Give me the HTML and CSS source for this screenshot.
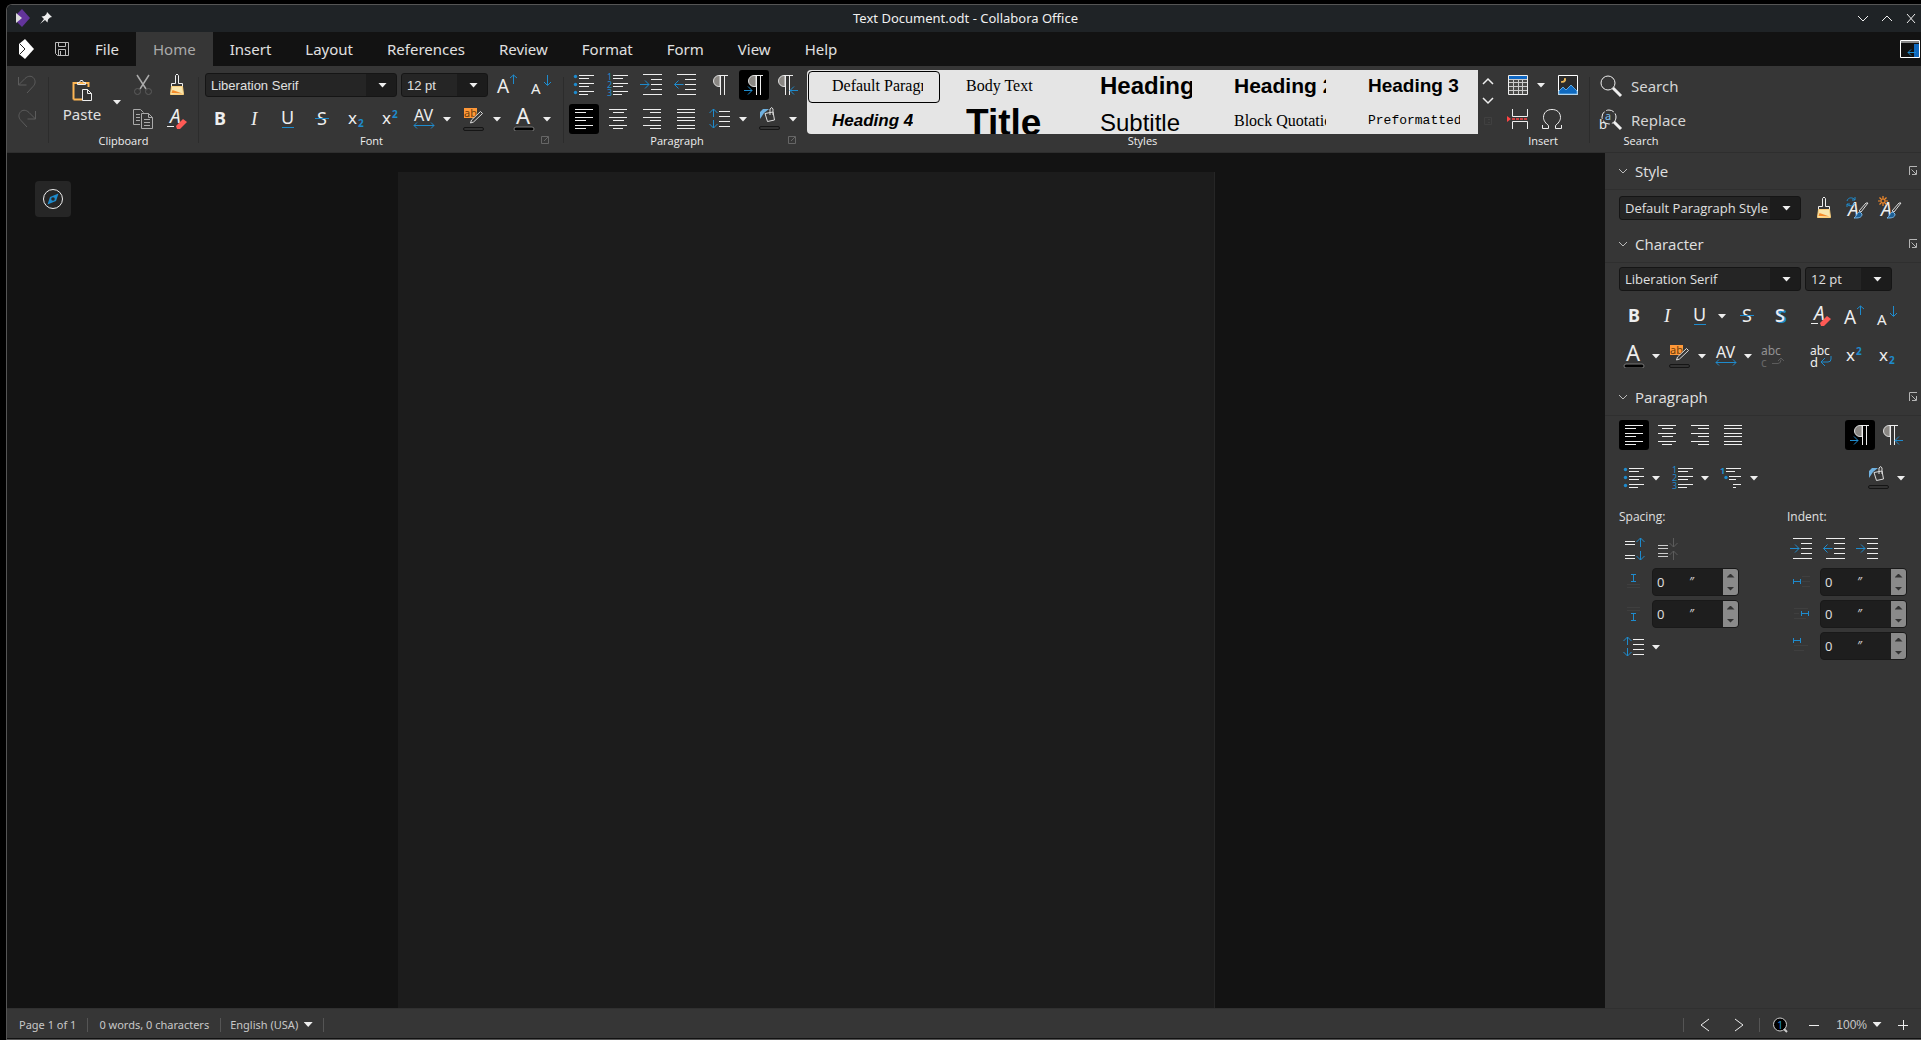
FILE: index.html
```html
<!DOCTYPE html>
<html lang="en">
<head>
    <meta charset="UTF-8">
    <meta name="viewport" content="width=device-width, initial-scale=1.0">
    <title>Text Document.odt - Collabora Office</title>
    <link rel="stylesheet" href="styles.css">
</head>
<body>

<!-- icon sheet -->
<svg class="sheet" aria-hidden="true">
    <symbol id="i-undo" viewBox="0 0 24 24"><path class="dim" d="M3.5 4v8h8M3.5 12L10 5.5c3-3 7-3 9 0s1 6-1 8L12 20"/></symbol>
    <symbol id="i-redo" viewBox="0 0 24 24"><path class="dim" d="M20.5 4v8h-8M20.5 12L14 5.5c-3-3-7-3-9 0s-1 6 1 8L12 20"/></symbol>
    <symbol id="i-save" viewBox="0 0 24 24"><path d="M5.5 5.5h13v13h-11l-2-2zM8.5 5.5v4h7v-4M8.5 18v-5.5h7V18M10.5 14v4" fill="none" stroke="#bbb"/></symbol>
    <symbol id="i-paste" viewBox="0 0 24 24"><path d="M3.5 20.5V4h15v4M3.5 20.5h9" fill="none" stroke="#fdb553" stroke-width="2"/><path class="w" d="M7.500 5.500v-2h2l1-2h2l1 2h2v2z"/><path d="M12.5 10.5h5l4 4v7h-9zM17.5 10.5v4h4" fill="#333" stroke="#eee"/></symbol>
    <symbol id="i-cut" viewBox="0 0 24 24"><path d="M6 2l9 14M18 2L9 16" fill="none" stroke="#aaa" stroke-width="1.5"/><g class="dim"><circle cx="6.5" cy="18.5" r="3"/><circle cx="17.5" cy="18.5" r="3"/></g></symbol>
    <symbol id="i-copy" viewBox="0 0 24 24"><path d="M9 17.5H2.5v-15h7l3 3M5 7.5h4M5 10.5h4M5 13.5h4M10.5 6.5h7l4 4v11h-11zM17.5 6.5v4h4M13 12.5h6M13 15.5h6M13 18.5h6" fill="none" stroke="#aaa"/></symbol>
    <symbol id="i-brush" viewBox="0 0 24 24"><path class="w" d="M6.5 13.5v-3h4v-8q1.5-3 3 0v8h4v3z"/><path d="M6.5 13.5h11l1 8h-13z" fill="#f8e6ae" stroke="#fdd07c"/><path d="M6.5 20l1-3 10 3.500z" fill="#f58b2b"/></symbol>
    <symbol id="i-clear" viewBox="0 0 24 24"><text x="5" y="16" font-size="19" font-style="italic">A</text><path class="w" d="M2 19.5h7"/><path d="M11 19l7-7 4 3-7 7h-3z" fill="#ff5a55"/></symbol>
    <symbol id="i-bold" viewBox="0 0 24 24"><text x="6" y="18" font-size="18" font-weight="700">B</text></symbol>
    <symbol id="i-italic" viewBox="0 0 24 24"><text x="9" y="18" font-size="19" font-style="italic" class="serif">I</text></symbol>
    <symbol id="i-under" viewBox="0 0 24 24"><text x="5" y="17" font-size="18">U</text><path class="b" d="M6 20.5h12"/></symbol>
    <symbol id="i-strike" viewBox="0 0 24 24"><text x="7" y="18" font-size="18">S</text><path class="b" d="M5 11.5h14"/></symbol>
    <symbol id="i-shadow" viewBox="0 0 24 24"><text x="9" y="19" font-size="18" font-weight="700" class="bt">S</text><text x="7" y="18" font-size="18" font-weight="500">S</text></symbol>
    <symbol id="i-sub" viewBox="0 0 24 24"><text x="4" y="17" font-size="17">x</text><text x="14" y="20" font-size="10" font-weight="700" class="bt">2</text></symbol>
    <symbol id="i-sup" viewBox="0 0 24 24"><text x="4" y="17" font-size="17">x</text><text x="14" y="11" font-size="10" font-weight="700" class="bt">2</text></symbol>
    <symbol id="i-kern" viewBox="0 0 24 24"><text x="2" y="14" font-size="16">AV</text><path class="b" d="M2 18.5h20M5 15.5l-3 3 3 3M19 15.5l3 3-3 3"/></symbol>
    <symbol id="i-mark" viewBox="0 0 24 24"><path d="M2 1h13v10H2z" fill="#ff9838"/><text x="2" y="10" font-size="11" class="dark">ab</text><path d="M18.5 4.5l2 2-9 8.500-3 1 1-3z" fill="#363636" stroke="#ddd"/><rect x="1.5" y="20.5" width="20" height="3" rx="1.5" fill="#333" stroke="#151515"/></symbol>
    <symbol id="i-color" viewBox="0 0 24 24"><text x="4" y="17" font-size="22">A</text><rect x="2" y="20" width="20" height="4" rx="2" fill="#000" stroke="#777"/></symbol>
    <symbol id="i-grow" viewBox="0 0 24 24"><text x="2" y="20" font-size="19">A</text><path class="b" d="M18.5 11V2M15 5l3.500-3L22 5"/></symbol>
    <symbol id="i-shrink" viewBox="0 0 24 24"><text x="2" y="21" font-size="15">A</text><path class="b" d="M18.5 2v10M15 9l3.5 3.500L22 9"/></symbol>
    <symbol id="i-bullets" viewBox="0 0 24 24"><g fill="#1e8bcd"><circle cx="3.5" cy="3.5" r="1.7"/><circle cx="3.5" cy="11.5" r="1.7"/><circle cx="3.5" cy="19.5" r="1.7"/></g><path class="w" d="M7 2.5h15M7 5.5h10M7 10.5h15M7 13.5h10M7 18.5h15M7 21.5h9"/></symbol>
    <symbol id="i-numbers" viewBox="0 0 24 24"><g font-size="9"><text class="bt" x="1" y="7">1</text><text class="bt" x="1" y="15">2</text><text class="bt" x="1" y="23">3</text></g><path class="w" d="M7 2.5h15M7 5.5h10M7 10.5h15M7 13.5h10M7 18.5h15M7 21.5h9"/></symbol>
    <symbol id="i-outline" viewBox="0 0 24 24"><text class="bt" x="0" y="8" font-size="9" font-weight="700">1</text><circle cx="6" cy="11.5" r="1.7" fill="#1e8bcd"/><path class="w" d="M6 2.5h15M6 5.5h9M9 10.5h12M9 13.5h7M13 18.5h8M13 21.5h3"/></symbol>
    <symbol id="i-indent" viewBox="0 0 24 24"><path class="w" d="M3 1.5h19M11 6.5h11M11 11.5h11M11 16.5h11M3 21.5h19"/><path class="b" d="M0 11.5h9M5 7.5l4 4-4 4"/></symbol>
    <symbol id="i-outdent" viewBox="0 0 24 24"><path class="w" d="M3 1.5h19M11 6.5h11M11 11.5h11M11 16.5h11M3 21.5h19"/><path class="b" d="M9.5 11.5h-9M4.5 7.5l-4 4 4 4"/></symbol>
    <symbol id="i-hang" viewBox="0 0 24 24"><path class="w" d="M3 1.5h19M11 6.5h11M11 11.5h11M11 16.5h11M11 21.5h11"/><path class="b" d="M0 11.5h9M5 7.5l4 4-4 4"/></symbol>
    <symbol id="i-pilcrow" viewBox="0 0 24 24"><path d="M12 2.5h-1a5.5 5.5 0 0 0 0 11h1z" fill="#8a8783" stroke="#ddd"/><path class="w" d="M11 2.5h9M12.5 2v20M16.5 2v20"/></symbol>
    <symbol id="i-ltr" viewBox="0 0 24 24"><path d="M14 2.5h-2a5.5 5.5 0 0 0 0 11h2z" fill="#8a8783" stroke="#ddd"/><path class="w" d="M13 2.5h8M14.5 2v20M18.5 2v20"/><path class="b" d="M2 17.5h8M6 13.5l4 4-4 4"/></symbol>
    <symbol id="i-rtl" viewBox="0 0 24 24"><path d="M9 2.5H8a5.5 5.5 0 0 0 0 11h1z" fill="#8a8783" stroke="#ddd"/><path class="w" d="M8 2.5h9M9.5 2v20M13.5 2v20"/><path class="b" d="M22 17.5h-8M18 13.5l-4 4 4 4"/></symbol>
    <symbol id="i-left" viewBox="0 0 24 24"><path class="w" d="M3 2.5h18M3 5.5h11M3 10.5h18M3 13.5h11M3 18.5h18M3 21.5h11"/></symbol>
    <symbol id="i-center" viewBox="0 0 24 24"><path class="w" d="M3 2.5h18M7 5.5h11M3 10.5h18M7 13.5h11M3 18.5h18M7 21.5h10"/></symbol>
    <symbol id="i-right" viewBox="0 0 24 24"><path class="w" d="M3 2.5h18M10 5.5h11M3 10.5h18M10 13.5h11M3 18.5h18M10 21.5h11"/></symbol>
    <symbol id="i-justify" viewBox="0 0 24 24"><path class="w" d="M3 2.5h18M3 5.5h18M3 10.5h18M3 13.5h18M3 18.5h18M3 21.5h18"/></symbol>
    <symbol id="i-spacing" viewBox="0 0 24 24"><path class="w" d="M11 4.5h11M11 9.5h11M11 14.5h11M11 19.5h11"/><path class="b" d="M5.5 2v8M1.5 6l4-4 4 4M5.5 13v8M1.5 17l4 4 4-4"/></symbol>
    <symbol id="i-fill" viewBox="0 0 24 24"><path d="M2 12V5l3-3h6l-5 4z" fill="#6fb1e0"/><path d="M7 6.500l8-1.500 1.500 8-7 1.500zM12 8V2q2-3 3 0v6" fill="none" stroke="#ddd"/><rect x="1.5" y="19.5" width="20" height="3" rx="1.5" fill="#333" stroke="#151515"/></symbol>
    <symbol id="i-table" viewBox="0 0 24 24"><path d="M2.5 2.5h19v19h-19z" fill="#4a4a48" stroke="#eee"/><path d="M3 3h18v3H3z" fill="#1068c4"/><path d="M3 6.5h18M3 9.5h18M3 13.5h18M3 17.5h18M7.5 7v14M12.5 7v14M16.5 7v14" stroke="#ccc" fill="none"/></symbol>
    <symbol id="i-image" viewBox="0 0 24 24"><path d="M2.5 2.5h19v19h-19z" fill="#2b2b2b" stroke="#fff"/><path d="M3 21v-3l4-4 3 3 5-5 6 6v3z" fill="#0f69bf" stroke="#5fa8e0"/><path d="M5 9q4 0 4-4 2 5-4 4z" fill="#f5be5a" stroke="#f5be5a"/></symbol>
    <symbol id="i-break" viewBox="0 0 24 24"><path class="w" d="M6.5 2v7.5h15V2M6.5 22v-7.500h15V22"/><path d="M6 12h16" stroke="#f44" stroke-width="1.5" stroke-dasharray="3 1"/><path d="M1 9l4 3-4 3z" fill="#f44"/></symbol>
    <symbol id="i-omega" viewBox="0 0 24 24"><path class="w" d="M2.5 18v3.5h6v-3C4 15 3.5 12 3.5 10.5c0-5 3.5-8 8.5-8s8.5 3 8.5 8c0 1.5-.5 4.5-5 8v3h6V18"/></symbol>
    <symbol id="i-search" viewBox="0 0 24 24"><circle class="w" cx="9" cy="9" r="7"/><path d="M14 14l8 8" stroke="#eee" stroke-width="3"/></symbol>
    <symbol id="i-replace" viewBox="0 0 24 24"><circle class="w" cx="10" cy="9" r="7" stroke-dasharray="8 2"/><path d="M15 14l7 7" stroke="#eee" stroke-width="3"/><text x="6" y="12" font-size="11" class="sky">a</text><text x="0" y="21" font-size="13">b</text></symbol>
    <symbol id="i-update" viewBox="0 0 24 24"><text x="3" y="20" font-size="19" font-style="italic">A</text><path class="b" d="M2 5c1-4 6-4 8-1M10 1v3H7M10 7c-1 3-6 4-8 1M2 11V8h3"/><path d="M23 7l-7 9-2-1 7-8z" fill="none" stroke="#ddd"/><path d="M15 16c-3 0-3 4-6 6 4 0 8 0 8-4z" fill="#1e5f94" stroke="#7cb8e8"/></symbol>
    <symbol id="i-new" viewBox="0 0 24 24"><text x="3" y="20" font-size="19" font-style="italic">A</text><path d="M5 0v10M0 5h10M1.5 1.5l7 7M8.5 1.5l-7 7" stroke="#f58b2b" stroke-width="1.2"/><circle cx="5" cy="5" r="2" fill="#363636" stroke="#f58b2b"/><path d="M23 7l-7 9-2-1 7-8z" fill="none" stroke="#ddd"/><path d="M15 16c-3 0-3 4-6 6 4 0 8 0 8-4z" fill="#1e5f94" stroke="#7cb8e8"/></symbol>
    <symbol id="i-nohyph" viewBox="0 0 24 24"><text x="1" y="11" font-size="12" class="grey">abc</text><text x="1" y="23" font-size="12" class="faint">c</text><path class="dim" d="M12 19.5h6q3 0 3-4M18 17l3-3 3 3"/></symbol>
    <symbol id="i-hyph" viewBox="0 0 24 24"><text x="1" y="11" font-size="12">abc</text><text x="1" y="23" font-size="13">d</text><path class="b" d="M22 12v3q0 3-3 3h-6M16 14l-4 4 4 4"/></symbol>
    <symbol id="i-incpar" viewBox="0 0 24 24"><path class="w" d="M3 4.5h10M3 7.5h10M3 18.5h10M3 21.5h10"/><path class="b" d="M18.5 10V1M14.5 5l4-4 4 4M18.5 14v9M14.5 19l4 4 4-4"/></symbol>
    <symbol id="i-decpar" viewBox="0 0 24 24"><path d="M3 8.5h10M3 11.5h10M3 16.5h10M3 19.5h10" stroke="#ccc"/><path class="dim" d="M18.5 1v9M14.5 6l4 4 4-4M18.5 23v-9M14.5 18l4-4 4 4"/></symbol>
    <symbol id="i-above" viewBox="0 0 24 24"><path class="b" d="M9 4.5h5M9 11.5h5M11.5 5v6"/><path d="M5 14.5h13M5 17.5h13" stroke="#3f3f3f"/></symbol>
    <symbol id="i-below" viewBox="0 0 24 24"><path class="b" d="M9 11.5h5M9 18.5h5M11.5 12v6"/><path d="M5 5.5h13M5 8.5h13" stroke="#3f3f3f"/></symbol>
    <symbol id="i-before" viewBox="0 0 24 24"><path class="b" d="M3.5 9v5M10.5 9v5M4 11.5h6"/><path d="M12 6.5h8M12 11.5h8M12 16.5h8" stroke="#3f3f3f"/></symbol>
    <symbol id="i-after" viewBox="0 0 24 24"><path class="b" d="M11.5 9v5M18.5 9v5M12 11.5h6"/><path d="M4 6.5h14M4 11.5h5M4 16.5h12" stroke="#3f3f3f"/></symbol>
    <symbol id="i-first" viewBox="0 0 24 24"><path class="b" d="M3.5 4v5M10.5 4v5M4 6.5h6"/><path d="M4 11.5h14M4 16.5h10" stroke="#3f3f3f"/></symbol>
    <symbol id="i-launch" viewBox="0 0 10 10"><path d="M5 1.5H1.5v7h7V5M4 6l4-4M5 1.5h3.5V5" fill="none" stroke="#666"/></symbol>
    <symbol id="i-more" viewBox="0 0 10 10"><path d="M1.5 9V.5H9M3.5 3.5L8 8M8.5 4v4.5H4" fill="none" stroke="#b5b5b5"/></symbol>
</svg>

<div class="window">
    <header class="titlebar">
        <div class="title-left">
            <svg width="18" height="20" viewBox="0 0 18 20"><path d="M8 1l8 9-8 9-6-6V7z" fill="#63349b"/><path d="M2 5l6 5-6 5z" fill="#ddd"/></svg>
            <svg width="14" height="14" viewBox="0 0 14 14"><path d="M8 1l5 5-2 .5-2 2-.5 3-2.500-2.500L1 13l4-5-2.500-2.500 3-.5 2-2z" fill="#eee"/></svg>
        </div>
        <h1>Text Document.odt - Collabora Office</h1>
        <div class="title-right">
            <button aria-label="Minimize"><svg width="12" height="12" viewBox="0 0 12 12"><path class="w" d="M1 4l5 5 5-5"/></svg></button>
            <button aria-label="Maximize"><svg width="12" height="12" viewBox="0 0 12 12"><path class="w" d="M1 9l5-5 5 5"/></svg></button>
            <button aria-label="Close"><svg width="12" height="12" viewBox="0 0 12 12"><path class="w" d="M2 2l8 9M10 2l-8 9"/></svg></button>
        </div>
    </header>

    <nav class="menubar">
        <svg class="logo" width="18" height="20" viewBox="0 0 18 20"><path d="M7 0l9 10-9 10-6-5V5z" fill="#fff"/><path d="M2 5l5 5-5 5" fill="none" stroke="#222"/></svg>
        <button class="save" aria-label="Save"><svg class="icon"><use href="#i-save"/></svg></button>
        <button class="tab">File</button>
        <button class="tab active">Home</button>
        <button class="tab">Insert</button>
        <button class="tab">Layout</button>
        <button class="tab">References</button>
        <button class="tab">Review</button>
        <button class="tab">Format</button>
        <button class="tab">Form</button>
        <button class="tab">View</button>
        <button class="tab">Help</button>
        <button class="side-toggle" aria-label="Sidebar"><svg width="20" height="18" viewBox="0 0 20 18"><path d="M.5.5h19v17H.5z" fill="#111" stroke="#fff"/><path d="M1 1h18v2H1z" fill="#888"/><path d="M14 4h5v13h-5z" fill="#0f69bf"/><path class="b" d="M16 12.5H8M11 9.5l-3 3 3 3"/></svg></button>
    </nav>

    <div class="ribbon">
        <section class="group undo">
            <div class="row"><button class="tb" aria-label="Undo"><svg class="icon"><use href="#i-undo"/></svg></button></div>
            <div class="row"><button class="tb" aria-label="Redo"><svg class="icon"><use href="#i-redo"/></svg></button></div>
        </section>

        <section class="group clipboard">
            <div class="clip-tools">
                <button class="paste"><svg class="icon"><use href="#i-paste"/></svg>Paste</button>
                <button class="arrow" aria-label="Paste options"></button>
                <div class="clip-grid">
                    <button class="tb" aria-label="Cut"><svg class="icon"><use href="#i-cut"/></svg></button>
                    <button class="tb" aria-label="Clone formatting"><svg class="icon"><use href="#i-brush"/></svg></button>
                    <button class="tb" aria-label="Copy"><svg class="icon"><use href="#i-copy"/></svg></button>
                    <button class="tb" aria-label="Clear formatting"><svg class="icon"><use href="#i-clear"/></svg></button>
                </div>
            </div>
            <div class="caption"><span>Clipboard</span></div>
        </section>

        <section class="group font">
            <div class="row">
                <span class="combo name"><select aria-label="Font name"><option>Liberation Serif</option></select></span>
                <span class="combo size"><select aria-label="Font size"><option>12 pt</option></select></span>
                <button class="tb" aria-label="Grow"><svg class="icon"><use href="#i-grow"/></svg></button>
                <button class="tb" aria-label="Shrink"><svg class="icon"><use href="#i-shrink"/></svg></button>
            </div>
            <div class="row">
                <button class="tb" aria-label="Bold"><svg class="icon"><use href="#i-bold"/></svg></button>
                <button class="tb" aria-label="Italic"><svg class="icon"><use href="#i-italic"/></svg></button>
                <button class="tb" aria-label="Underline"><svg class="icon"><use href="#i-under"/></svg></button>
                <button class="tb" aria-label="Strikethrough"><svg class="icon"><use href="#i-strike"/></svg></button>
                <button class="tb" aria-label="Subscript"><svg class="icon"><use href="#i-sub"/></svg></button>
                <button class="tb" aria-label="Superscript"><svg class="icon"><use href="#i-sup"/></svg></button>
                <span class="split"><button class="tb" aria-label="Spacing"><svg class="icon"><use href="#i-kern"/></svg></button><button class="arrow" aria-label="Spacing options"></button></span>
                <span class="split"><button class="tb" aria-label="Highlighting"><svg class="icon"><use href="#i-mark"/></svg></button><button class="arrow" aria-label="Highlighting colors"></button></span>
                <span class="split"><button class="tb" aria-label="Font color"><svg class="icon"><use href="#i-color"/></svg></button><button class="arrow" aria-label="Font colors"></button></span>
            </div>
            <div class="caption"><span>Font</span><button class="launch" aria-label="Font dialog"><svg width="10" height="10"><use href="#i-launch"/></svg></button></div>
        </section>

        <section class="group para">
            <div class="row">
                <button class="tb" aria-label="Bullets"><svg class="icon"><use href="#i-bullets"/></svg></button>
                <button class="tb" aria-label="Numbering"><svg class="icon"><use href="#i-numbers"/></svg></button>
                <button class="tb" aria-label="Increase indent"><svg class="icon"><use href="#i-indent"/></svg></button>
                <button class="tb" aria-label="Decrease indent"><svg class="icon"><use href="#i-outdent"/></svg></button>
                <button class="tb" aria-label="Formatting marks"><svg class="icon"><use href="#i-pilcrow"/></svg></button>
                <button class="tb on" aria-label="Left to right"><svg class="icon"><use href="#i-ltr"/></svg></button>
                <button class="tb" aria-label="Right to left"><svg class="icon"><use href="#i-rtl"/></svg></button>
            </div>
            <div class="row">
                <button class="tb on" aria-label="Align left"><svg class="icon"><use href="#i-left"/></svg></button>
                <button class="tb" aria-label="Center"><svg class="icon"><use href="#i-center"/></svg></button>
                <button class="tb" aria-label="Align right"><svg class="icon"><use href="#i-right"/></svg></button>
                <button class="tb" aria-label="Justify"><svg class="icon"><use href="#i-justify"/></svg></button>
                <span class="split"><button class="tb" aria-label="Line spacing"><svg class="icon"><use href="#i-spacing"/></svg></button><button class="arrow" aria-label="Line spacing options"></button></span>
                <span class="split"><button class="tb" aria-label="Background"><svg class="icon"><use href="#i-fill"/></svg></button><button class="arrow" aria-label="Background colors"></button></span>
            </div>
            <div class="caption"><span>Paragraph</span><button class="launch" aria-label="Paragraph dialog"><svg width="10" height="10"><use href="#i-launch"/></svg></button></div>
        </section>

        <section class="group styles">
            <div class="gallery">
                <button class="style selected"><span class="s-body">Default Paragraph Style</span></button>
                <button class="style"><span class="s-body">Body Text</span></button>
                <button class="style"><span class="s-h1">Heading 1</span></button>
                <button class="style"><span class="s-h2">Heading 2</span></button>
                <button class="style"><span class="s-h3">Heading 3</span></button>
                <button class="style"><span class="s-h4">Heading 4</span></button>
                <button class="style"><span class="s-title">Title</span></button>
                <button class="style"><span class="s-sub">Subtitle</span></button>
                <button class="style"><span class="s-body">Block Quotation</span></button>
                <button class="style"><span class="s-pre">Preformatted Text</span></button>
            </div>
            <div class="caption"><span>Styles</span></div>
        </section>

        <div class="scroller">
            <button aria-label="Previous styles"><svg width="12" height="8" viewBox="0 0 12 8"><path class="w thick" d="M1 7l5-5 5 5"/></svg></button>
            <button aria-label="Next styles"><svg width="12" height="8" viewBox="0 0 12 8"><path class="w thick" d="M1 1l5 5 5-5"/></svg></button>
            <button aria-label="More styles"><svg width="8" height="8" viewBox="0 0 8 8"><path d="M.5.5h7v7h-7zM4 2.5h2M4 5.5h2" fill="none" stroke="#404040"/></svg></button>
        </div>

        <section class="group insert">
            <div class="row">
                <span class="split"><button class="tb" aria-label="Table"><svg class="icon"><use href="#i-table"/></svg></button><button class="arrow" aria-label="Table size"></button></span>
                <button class="tb" aria-label="Image"><svg class="icon"><use href="#i-image"/></svg></button>
            </div>
            <div class="row">
                <button class="tb" aria-label="Page break"><svg class="icon"><use href="#i-break"/></svg></button>
                <button class="tb" aria-label="Symbol"><svg class="icon"><use href="#i-omega"/></svg></button>
            </div>
            <div class="caption"><span>Insert</span></div>
        </section>

        <section class="group find">
            <div class="row"><button class="wide"><svg class="icon"><use href="#i-search"/></svg>Search</button></div>
            <div class="row"><button class="wide"><svg class="icon"><use href="#i-replace"/></svg>Replace</button></div>
            <div class="caption"><span>Search</span></div>
        </section>
    </div>

    <div class="main">
        <main class="canvas">
            <button class="navigator" aria-label="Navigator"><svg width="22" height="22" viewBox="0 0 22 22"><circle class="w" cx="11" cy="11" r="9.5"/><path d="M16.5 5.5l-2.500 7.500-8.500 3.500 2.500-7.500z" fill="#1e8bcd"/><circle cx="11" cy="11" r="1.8" fill="#262626"/></svg></button>
            <div class="page"></div>
        </main>

        <aside class="sidebar">
            <section>
                <h2><svg width="10" height="6" viewBox="0 0 10 6"><path d="M1 1l4 4 4-4" fill="none" stroke="#bbb"/></svg>Style<button class="more" aria-label="Style options"><svg width="10" height="10"><use href="#i-more"/></svg></button></h2>
                <div class="panel style-panel">
                    <div class="line">
                        <span class="combo wide-combo"><select aria-label="Paragraph style"><option>Default Paragraph Style</option></select></span>
                        <div class="set">
                            <button class="tb" aria-label="Clone formatting"><svg class="icon"><use href="#i-brush"/></svg></button>
                            <button class="tb" aria-label="Update style"><svg class="icon"><use href="#i-update"/></svg></button>
                            <button class="tb" aria-label="New style"><svg class="icon"><use href="#i-new"/></svg></button>
                        </div>
                    </div>
                </div>
            </section>
            <section>
                <h2><svg width="10" height="6" viewBox="0 0 10 6"><path d="M1 1l4 4 4-4" fill="none" stroke="#bbb"/></svg>Character<button class="more" aria-label="Character options"><svg width="10" height="10"><use href="#i-more"/></svg></button></h2>
                <div class="panel char-panel">
                    <div class="line combos">
                        <span class="combo wide-combo"><select aria-label="Font name"><option>Liberation Serif</option></select></span>
                        <span class="combo size"><select aria-label="Font size"><option>12 pt</option></select></span>
                    </div>
                    <div class="line">
                        <div class="set">
                            <button class="tb" aria-label="Bold"><svg class="icon"><use href="#i-bold"/></svg></button>
                            <button class="tb" aria-label="Italic"><svg class="icon"><use href="#i-italic"/></svg></button>
                            <span class="split"><button class="tb" aria-label="Underline"><svg class="icon"><use href="#i-under"/></svg></button><button class="arrow" aria-label="Underline options"></button></span>
                            <button class="tb" aria-label="Strikethrough"><svg class="icon"><use href="#i-strike"/></svg></button>
                            <button class="tb" aria-label="Shadow"><svg class="icon"><use href="#i-shadow"/></svg></button>
                        </div>
                        <div class="set">
                            <button class="tb" aria-label="Clear formatting"><svg class="icon"><use href="#i-clear"/></svg></button>
                            <button class="tb" aria-label="Grow"><svg class="icon"><use href="#i-grow"/></svg></button>
                            <button class="tb" aria-label="Shrink"><svg class="icon"><use href="#i-shrink"/></svg></button>
                        </div>
                    </div>
                    <div class="line">
                        <div class="set tight">
                            <span class="split"><button class="tb" aria-label="Font color"><svg class="icon"><use href="#i-color"/></svg></button><button class="arrow" aria-label="Font colors"></button></span>
                            <span class="split"><button class="tb" aria-label="Highlighting"><svg class="icon"><use href="#i-mark"/></svg></button><button class="arrow" aria-label="Highlighting colors"></button></span>
                            <span class="split"><button class="tb" aria-label="Spacing"><svg class="icon"><use href="#i-kern"/></svg></button><button class="arrow" aria-label="Spacing options"></button></span>
                            <button class="tb" aria-label="No hyphenation"><svg class="icon"><use href="#i-nohyph"/></svg></button>
                        </div>
                        <div class="set">
                            <button class="tb" aria-label="Hyphenation"><svg class="icon"><use href="#i-hyph"/></svg></button>
                            <button class="tb" aria-label="Superscript"><svg class="icon"><use href="#i-sup"/></svg></button>
                            <button class="tb" aria-label="Subscript"><svg class="icon"><use href="#i-sub"/></svg></button>
                        </div>
                    </div>
                </div>
            </section>
            <section>
                <h2><svg width="10" height="6" viewBox="0 0 10 6"><path d="M1 1l4 4 4-4" fill="none" stroke="#bbb"/></svg>Paragraph<button class="more" aria-label="Paragraph options"><svg width="10" height="10"><use href="#i-more"/></svg></button></h2>
                <div class="panel para-panel">
                    <div class="line">
                        <div class="set">
                            <button class="tb on" aria-label="Align left"><svg class="icon"><use href="#i-left"/></svg></button>
                            <button class="tb" aria-label="Center"><svg class="icon"><use href="#i-center"/></svg></button>
                            <button class="tb" aria-label="Align right"><svg class="icon"><use href="#i-right"/></svg></button>
                            <button class="tb" aria-label="Justify"><svg class="icon"><use href="#i-justify"/></svg></button>
                        </div>
                        <div class="set">
                            <button class="tb on" aria-label="Left to right"><svg class="icon"><use href="#i-ltr"/></svg></button>
                            <button class="tb" aria-label="Right to left"><svg class="icon"><use href="#i-rtl"/></svg></button>
                        </div>
                    </div>
                    <div class="line">
                        <div class="set lists">
                            <span class="split"><button class="tb" aria-label="Bullets"><svg class="icon"><use href="#i-bullets"/></svg></button><button class="arrow" aria-label="Bullet styles"></button></span>
                            <span class="split"><button class="tb" aria-label="Numbering"><svg class="icon"><use href="#i-numbers"/></svg></button><button class="arrow" aria-label="Number styles"></button></span>
                            <span class="split"><button class="tb" aria-label="Outline"><svg class="icon"><use href="#i-outline"/></svg></button><button class="arrow" aria-label="Outline styles"></button></span>
                        </div>
                        <span class="split"><button class="tb" aria-label="Background"><svg class="icon"><use href="#i-fill"/></svg></button><button class="arrow" aria-label="Background colors"></button></span>
                    </div>
                    <div class="measures">
                        <div class="col">
                            <h3>Spacing:</h3>
                            <div class="set">
                                <button class="tb" aria-label="Increase spacing"><svg class="icon"><use href="#i-incpar"/></svg></button>
                                <button class="tb" aria-label="Decrease spacing"><svg class="icon"><use href="#i-decpar"/></svg></button>
                            </div>
                            <label class="field"><svg class="icon"><use href="#i-above"/></svg><span class="spin"><input type="text" value="0" aria-label="Above"><i>″</i><span class="steps"><button aria-label="Up"></button><button aria-label="Down"></button></span></span></label>
                            <label class="field"><svg class="icon"><use href="#i-below"/></svg><span class="spin"><input type="text" value="0" aria-label="Below"><i>″</i><span class="steps"><button aria-label="Up"></button><button aria-label="Down"></button></span></span></label>
                            <span class="split"><button class="tb" aria-label="Line spacing"><svg class="icon"><use href="#i-spacing"/></svg></button><button class="arrow" aria-label="Line spacing options"></button></span>
                        </div>
                        <div class="col">
                            <h3>Indent:</h3>
                            <div class="set">
                                <button class="tb" aria-label="Increase indent"><svg class="icon"><use href="#i-indent"/></svg></button>
                                <button class="tb" aria-label="Decrease indent"><svg class="icon"><use href="#i-outdent"/></svg></button>
                                <button class="tb" aria-label="Hanging indent"><svg class="icon"><use href="#i-hang"/></svg></button>
                            </div>
                            <label class="field"><svg class="icon"><use href="#i-before"/></svg><span class="spin"><input type="text" value="0" aria-label="Before"><i>″</i><span class="steps"><button aria-label="Up"></button><button aria-label="Down"></button></span></span></label>
                            <label class="field"><svg class="icon"><use href="#i-after"/></svg><span class="spin"><input type="text" value="0" aria-label="After"><i>″</i><span class="steps"><button aria-label="Up"></button><button aria-label="Down"></button></span></span></label>
                            <label class="field"><svg class="icon"><use href="#i-first"/></svg><span class="spin"><input type="text" value="0" aria-label="First line"><i>″</i><span class="steps"><button aria-label="Up"></button><button aria-label="Down"></button></span></span></label>
                        </div>
                    </div>
                </div>
            </section>
        </aside>
    </div>

    <footer class="status">
        <span class="cell">Page 1 of 1</span>
        <span class="cell">0 words, 0 characters</span>
        <button class="cell lang">English (USA)<span class="arrow"></span></button>
        <div class="zoom">
            <button aria-label="Previous page"><svg width="12" height="14" viewBox="0 0 12 14"><path class="w" d="M10 1L2 7l8 6"/></svg></button>
            <button class="next" aria-label="Next page"><svg width="12" height="14" viewBox="0 0 12 14"><path class="w" d="M2 1l8 6-8 6"/></svg></button>
            <button class="reset" aria-label="Reset zoom"><svg width="16" height="16" viewBox="0 0 16 16"><circle cx="8" cy="7.5" r="6.5" fill="#000" stroke="#ccc"/><path d="M12 12l3 3" stroke="#ccc" stroke-width="2"/><text class="bt" x="5" y="12" font-size="11">1</text></svg></button>
            <button aria-label="Zoom out"><svg width="10" height="10" viewBox="0 0 10 10"><path class="w" d="M0 5.5h10"/></svg></button>
            <button class="level">100%<span class="arrow"></span></button>
            <button aria-label="Zoom in"><svg width="10" height="10" viewBox="0 0 10 10"><path class="w" d="M0 5.5h10M5.5 0v10"/></svg></button>
        </div>
    </footer>
</div>

</body>
</html>
```
FILE: styles.css
```css
*{
    box-sizing: border-box;
}
body{
    margin: 0;
    height: 100vh;
    padding: 4px 0 0 6px;
    overflow: hidden;
    background: #000;
    color: #e0e0e0;
    font-family: "Noto Sans", sans-serif;
    font-size: 12px;
}
button{
    display: inline-flex;
    align-items: center;
    justify-content: center;
    padding: 0;
    border: 0;
    background: none;
    color: inherit;
    font: inherit;
}
svg{
    display: block;
    flex: none;
}
svg text{
    fill: #eee;
    font-family: "Noto Sans", sans-serif;
}
svg text.serif{
    font-family: "Liberation Serif", serif;
}
svg text.bt{
    fill: #1e8bcd;
}
svg text.dark{
    fill: #6b3c0c;
}
svg text.sky{
    fill: #7cc0f0;
}
svg text.grey{
    fill: #929292;
}
svg text.faint{
    fill: #666;
}
.w{
    fill: none;
    stroke: #eee;
}
.b{
    fill: none;
    stroke: #1e8bcd;
}
.dim{
    fill: none;
    stroke: #5c5c5c;
}
.thick{
    stroke-width: 1.5;
}
.sheet{
    display: none;
}
.icon{
    width: 24px;
    height: 24px;
}

.window{
    display: flex;
    flex-direction: column;
    height: 100%;
    border: 1px solid #555;
    border-right: 0;
    border-radius: 6px 0 0 0;
    overflow: hidden;
}

/* title bar */
.titlebar{
    display: flex;
    align-items: center;
    height: 27px;
    flex: none;
    padding: 0 4px 2px 7px;
    background: #1f2326;
}
.title-left, .title-right{
    display: flex;
    align-items: center;
    flex: 1;
    gap: 7px;
}
.title-right{
    justify-content: flex-end;
    gap: 12px;
}
.titlebar h1{
    margin: 0;
    font-size: 13px;
    font-weight: 400;
    color: #f0f0f0;
}

/* tabs */
.menubar{
    display: flex;
    align-items: center;
    height: 34px;
    flex: none;
    padding-left: 11px;
    background: #121212;
}
.save{
    width: 32px;
    margin-left: 10px;
}
.tab{
    height: 34px;
    padding: 0 17px;
    font-size: 15px;
}
.tab.active{
    background: #363636;
    color: #aaa;
}
.side-toggle{
    margin-left: auto;
    margin-right: 1px;
}

/* ribbon */
.ribbon{
    display: flex;
    height: 87px;
    flex: none;
    background: #363636;
    border-bottom: 1px solid #2e2e2e;
}
.group{
    display: flex;
    flex-direction: column;
    flex: none;
    gap: 4px;
    padding-top: 4px;
}
.undo, .clipboard, .font, .insert{
    border-right: 1px solid #2c2c2c;
    border-image: linear-gradient(#363636 12px, #2c2c2c 12px, #2c2c2c 76px, #363636 76px) 1;
    border-top: 0;
    border-bottom: 0;
    border-left: 0;
}
.row, .set, .line, .split{
    display: flex;
    align-items: center;
}
.row{
    height: 30px;
    gap: 4px;
}
.tb{
    width: 30px;
    height: 30px;
    border-radius: 3px;
}
.tb.on{
    background: #000;
}
.arrow{
    width: 16px;
    height: 30px;
    display: inline-flex;
    align-items: center;
    justify-content: center;
}
.arrow::after, .combo::after{
    content: "";
    width: 9px;
    height: 5px;
    background: #eee;
    clip-path: polygon(0 0, 100% 0, 50% 100%);
}
.caption{
    display: flex;
    align-items: center;
    height: 14px;
    margin-top: -5px;
    font-family: "Open Sans", sans-serif;
    font-size: 11px;
    color: #eee;
}
.caption span{
    flex: 1;
    text-align: center;
}
.launch{
    width: 14px;
    margin-right: 4px;
}
.undo{
    padding-left: 5px;
    padding-right: 6px;
}
.clipboard{
    padding-left: 6px;
    padding-right: 6px;
}
.clip-tools{
    display: flex;
    align-items: center;
    height: 64px;
}
.clip-grid{
    display: grid;
    grid-template-columns: 30px 30px;
    gap: 4px;
    margin-left: 3px;
}
.paste{
    flex-direction: column;
    width: 54px;
    font-size: 15px;
    line-height: 22px;
}
.font{
    padding-left: 6px;
    padding-right: 7px;
}
.combo{
    display: grid;
    align-items: center;
    height: 24px;
}
.combo select{
    grid-area: 1 / 1;
    width: 100%;
    height: 24px;
    padding: 0 5px;
    appearance: none;
    border: 1px solid #151515;
    border-radius: 3px;
    background: linear-gradient(to left, #1c1c1c 30px, #252525 30px);
    color: #e0e0e0;
    font-family: "Open Sans", sans-serif;
    font-size: 13px;
}
.ribbon .combo select{
    font-family: "Liberation Sans", sans-serif;
}
.combo::after{
    grid-area: 1 / 1;
    justify-self: end;
    margin-right: 10px;
}
.combo.name{
    width: 192px;
}
.combo.size{
    width: 87px;
}
.combo.wide-combo{
    width: 182px;
}
.para{
    padding-left: 5px;
}
.styles{
    margin-left: 4px;
}
.gallery{
    display: grid;
    grid-template-columns: repeat(5, 134px);
    grid-template-rows: 32px 37px;
    height: 64px;
    padding: 1px 0 0 1px;
    overflow: hidden;
    border-radius: 4px 0 0 4px;
    background: #e5e5e5;
    color: #000;
}
.style{
    justify-content: flex-start;
    padding: 0 17px 2px 23px;
    border: 1px solid transparent;
    border-radius: 4px;
    overflow: hidden;
}
.style.selected{
    margin-right: 2px;
    padding-right: 16px;
    border-color: #000;
}
.style span{
    overflow: hidden;
    white-space: nowrap;
    font-family: "Liberation Sans", sans-serif;
    font-weight: 700;
}
.style .s-body{
    font-family: "Liberation Serif", serif;
    font-size: 16px;
    font-weight: 400;
}
.style .s-h1{
    font-size: 24px;
}
.style .s-h2{
    font-size: 21px;
}
.style .s-h3{
    font-size: 19px;
}
.style .s-h4{
    font-size: 17px;
    font-style: italic;
}
.style .s-title{
    padding-top: 4px;
    font-size: 37px;
}
.style .s-sub{
    padding-top: 4px;
    font-size: 24px;
    font-weight: 400;
}
.style .s-pre{
    font-family: "Liberation Mono", monospace;
    font-size: 13px;
    font-weight: 400;
}
.scroller{
    display: flex;
    flex-direction: column;
    width: 20px;
    padding-top: 5px;
}
.scroller button{
    height: 20px;
}
.insert{
    padding-left: 5px;
    padding-right: 6px;
}
.find{
    padding-left: 6px;
}
.wide{
    height: 30px;
    padding-left: 3px;
    padding-top: 1px;
    gap: 8px;
    font-size: 15px;
    color: #d5d5d5;
}

/* document */
.main{
    display: flex;
    flex: 1;
    min-height: 0;
}
.canvas{
    position: relative;
    display: flex;
    justify-content: center;
    flex: 1;
    padding-top: 19px;
    background: #131313;
}
.page{
    width: 817px;
    background: #1c1c1c;
    border-right: 1px solid #262626;
}
.navigator{
    position: absolute;
    left: 28px;
    top: 28px;
    width: 36px;
    height: 36px;
    border-radius: 4px;
    background: #262626;
}

/* sidebar */
.sidebar{
    width: 316px;
    flex: none;
    overflow: hidden;
    background: #363636;
    font-family: "Open Sans", sans-serif;
}
.sidebar .arrow{
    width: 14px;
}
.sidebar h2{
    display: flex;
    align-items: center;
    height: 37px;
    margin: 0;
    padding: 0 3px 1px 13px;
    gap: 7px;
    border-bottom: 1px solid #2f2f2f;
    font-size: 15px;
    font-weight: 400;
}
.more{
    margin-left: auto;
}
.panel{
    display: flex;
    flex-direction: column;
    padding: 4px 13px 8px 14px;
}
.line{
    justify-content: space-between;
}
.set{
    gap: 3px;
}
.set.tight{
    gap: 2px;
}
.set.lists{
    gap: 5px;
}
.style-panel{
    padding-top: 3px;
    padding-bottom: 3px;
    padding-right: 16px;
}
.char-panel{
    gap: 10px;
    padding-right: 19px;
}
.combos{
    justify-content: flex-start;
    gap: 4px;
}
.para-panel{
    gap: 13px;
}
.measures{
    display: grid;
    grid-template-columns: 168px auto;
}
.col{
    display: flex;
    flex-direction: column;
    gap: 4px;
}
.col h3{
    margin: 2px 0 4px;
    font-size: 12px;
    font-weight: 400;
    line-height: 18px;
}
.field{
    display: flex;
    align-items: center;
    gap: 6px;
    padding-left: 3px;
}
.spin{
    display: flex;
    width: 87px;
    height: 28px;
    overflow: hidden;
    border: 1px solid #191919;
    border-radius: 4px;
    background: #1e1e1e;
}
.spin input{
    width: 36px;
    padding: 0 4px;
    border: 0;
    background: none;
    color: #e0e0e0;
    font-family: "Open Sans", sans-serif;
    font-size: 13px;
}
.spin i{
    flex: 1;
    line-height: 26px;
}
.steps{
    display: flex;
    flex-direction: column;
    width: 15px;
    background: #8a8a8a;
}
.steps button{
    flex: 1;
}
.steps button::after{
    content: "";
    width: 8px;
    height: 4px;
    background: #333;
    clip-path: polygon(0 100%, 50% 0, 100% 100%);
}
.steps button:last-child::after{
    clip-path: polygon(0 0, 100% 0, 50% 100%);
}

/* status bar */
.status{
    display: flex;
    align-items: center;
    height: 31px;
    flex: none;
    padding-left: 1px;
    padding-top: 2px;
    background: #363636;
    border-top: 1px solid #303030;
    border-bottom: 1px solid #111;
    color: #c8c8c8;
    font-size: 11px;
}
.cell{
    height: 14px;
    line-height: 14px;
    padding: 0 11px;
    border-right: 1px solid #555;
}
.lang{
    padding: 0 7px 0 9px;
}
.status .arrow{
    height: 14px;
    margin-left: 2px;
}
.zoom{
    display: flex;
    align-items: center;
    margin-left: auto;
    padding-right: 13px;
}
.zoom button{
    height: 14px;
}
.zoom button:first-child{
    padding-left: 15px;
    border-left: 1px solid #555;
}
.zoom .next{
    padding: 0 14px 0 22px;
    border-right: 1px solid #555;
}
.zoom .reset{
    padding: 0 21px 0 12px;
}
.zoom .level{
    padding: 0 13px 0 17px;
    font-family: "Liberation Sans", sans-serif;
    font-size: 12px;
}
```
